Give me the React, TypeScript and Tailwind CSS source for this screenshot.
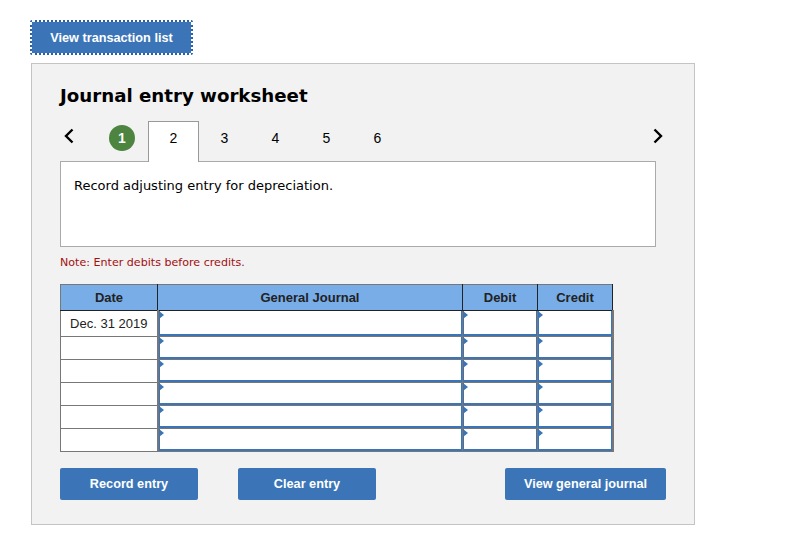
const steps = ["3", "4", "5", "6"];
const rows = ["Dec. 31 2019", "", "", "", "", ""];

const Chevron = ({ flip }: { flip?: boolean }) => (
    <svg width="12" height="16" viewBox="0 0 12 16" className={flip ? "rotate-180" : ""}>
        <path d="M9.5 1.5 L3 8 L9.5 14.5" fill="none" stroke="#000" strokeWidth="2.4" />
    </svg>
);

const InputCell = ({ tall, last }: { tall?: boolean; last?: boolean }) => (
    <td className={`p-0 border border-[#777] ${last ? "border-r-2" : ""}`}>
        <div className={`relative bg-white border-x border-b-2 border-[#3b75b8] ${tall ? "h-[25px]" : "h-[22px]"}`}>
            <span className="absolute -left-[1px] top-[0px] w-0 h-0 border-y-[4px] border-y-transparent border-l-[5px] border-l-[#3b75b8]" />
        </div>
    </td>
);

const ActionButton = ({ label, className }: { label: string; className: string }) => (
    <button className={`h-[32px] pt-[2px] rounded-[2px] bg-[#3b75b8] text-white text-[12.7px] font-bold ${className}`}>
        {label}
    </button>
);

export default function App() {
    return (
        <div className="w-[794px] h-[551px] bg-white pt-[20px] pl-[30px] overflow-hidden font-['Liberation_Sans',sans-serif]">
            <button className="block w-[163px] h-[35px] pt-[2px] rounded-[2px] bg-[#3b75b8] bg-clip-padding border-2 border-dotted border-[#2a62a8] text-white text-[12.7px] font-bold">
                View transaction list
            </button>

            <div className="ml-[1px] mt-[8px] w-[664px] h-[462px] bg-[#f2f2f2] border border-[#c4c4c4] pl-[28px] pr-[38px]">
                <h1 className="pt-[20px] h-[57px] text-[18.2px] leading-[24px] font-bold text-black font-['DejaVu_Sans',sans-serif]">
                    Journal entry worksheet
                </h1>

                <div className="flex h-[41px] text-[14px] text-black">
                    <div className="w-[60px] pl-[3px] pt-[7px]">
                        <Chevron />
                    </div>
                    <div className="w-[28px] -ml-[12px] mr-[12px] pt-[4px]">
                        <div className="ml-[1px] w-[26px] h-[26px] rounded-full bg-[#4c8440] text-white font-bold flex items-center justify-center">
                            1
                        </div>
                    </div>
                    <div className="relative z-10 w-[51px] h-[41px] bg-white border border-b-0 border-[#999] flex items-start justify-center pt-[6px]">
                        2
                    </div>
                    {steps.map((s) => (
                        <div key={s} className="w-[51px] flex justify-center pt-[7px]">
                            {s}
                        </div>
                    ))}
                    <div className="ml-auto pt-[7px] -mr-[8px]">
                        <Chevron flip />
                    </div>
                </div>

                <div className="-mt-[1px] w-[596px] h-[86px] bg-white border border-[#aaa] pl-[13px] pt-[15px] text-[13px] leading-[18px] text-black font-['DejaVu_Sans',sans-serif]">
                    Record adjusting entry for depreciation.
                </div>

                <p className="mt-[9px] h-[28px] text-[11.1px] leading-[14px] text-[#a30f0f] font-['DejaVu_Sans',sans-serif]">
                    Note: Enter debits before credits.
                </p>

                <table className="table-fixed border-collapse w-[552px] text-[14px] text-[#222]">
                    <colgroup>
                        <col className="w-[97px]" />
                        <col className="w-[305px]" />
                        <col className="w-[75px]" />
                        <col className="w-[75px]" />
                    </colgroup>
                    <thead>
                        <tr className="h-[26px] bg-[#78ade8] text-[13px] font-bold">
                            <th className="border border-[#777] border-r-[#222] border-b-[#222]">Date</th>
                            <th className="border border-[#777] border-r-[#222] border-b-[#222] border-l-[#222]">General Journal</th>
                            <th className="border border-[#777] border-r-[#222] border-b-[#222] border-l-[#222]">Debit</th>
                            <th className="border border-[#777] border-r-[#222] border-b-[#222] border-l-[#222]">Credit</th>
                        </tr>
                    </thead>
                    <tbody>
                        {rows.map((date, i) => (
                            <tr key={i} className="bg-white">
                                <td className="p-0 border border-[#777] border-r-2 text-center text-[13px]">{date}</td>
                                <InputCell tall={i === 0} />
                                <InputCell tall={i === 0} />
                                <InputCell tall={i === 0} last />
                            </tr>
                        ))}
                    </tbody>
                </table>

                <div className="flex mt-[16px] w-[606px]">
                    <ActionButton label="Record entry" className="w-[138px]" />
                    <ActionButton label="Clear entry" className="w-[138px] ml-[40px]" />
                    <ActionButton label="View general journal" className="w-[161px] ml-auto" />
                </div>
            </div>
        </div>
    );
}
